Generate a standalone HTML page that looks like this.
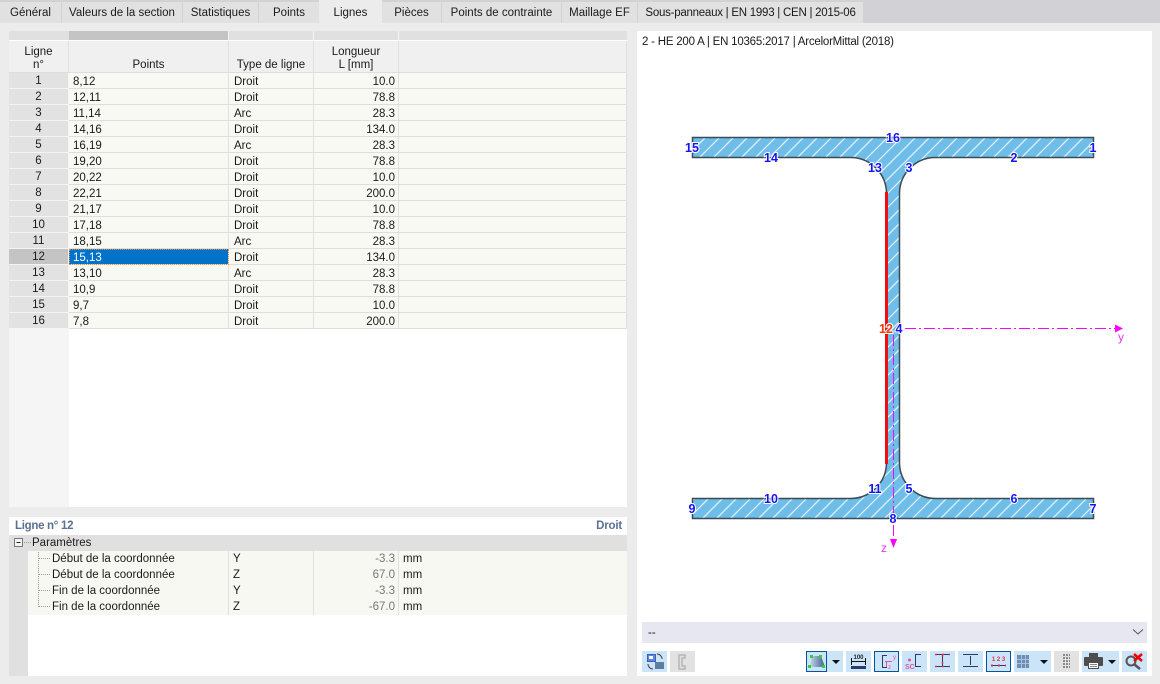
<!DOCTYPE html>
<html lang="fr"><head><meta charset="utf-8"><title>Lignes</title>
<style>
html,body{margin:0;padding:0}
body{width:1160px;height:684px;position:relative;overflow:hidden;background:#ececec;font-family:"Liberation Sans",sans-serif;font-size:11.5px;color:#1a1a1a}
.a{position:absolute}
.tab{position:absolute;top:2px;height:21px;background:#e1e1e1;line-height:23px;text-align:center;white-space:nowrap}
table{position:absolute;border-collapse:separate;border-spacing:0;table-layout:fixed;left:9px;top:41px;width:618px}
td{box-sizing:border-box;padding:3px 0 0;height:16px;line-height:12px;border-right:1px solid #e0e0e0;border-bottom:1px solid #dedede;background:#f8f9f3;white-space:nowrap;overflow:hidden}
td.n{padding-top:2px;line-height:13px;background:#e2e2e2;text-align:center;border-right:1px solid #f4f4f4;border-bottom:1px solid #f4f4f4}
td.p{padding-left:4px}td.t{padding-left:5px}td.l{text-align:right;padding-right:3px}
th{font-weight:normal;background:#f0f0f0;height:32px;line-height:13px;vertical-align:bottom;padding:0;border-right:1px solid #e0e0e0;border-bottom:1px solid #dedede;text-align:center;box-sizing:border-box}
td.s{background:#0072c9;color:#fff;outline:1px dotted #e8913a;outline-offset:-1px}
td.ns{background:#c4c4c4}
.pr{position:absolute;left:28px;width:599px;height:16px;line-height:16px;background:#f7f8f2}
.pr span{position:absolute;top:0;white-space:nowrap}
.b{position:absolute;top:651px;height:21px;background:#cce4f7;box-sizing:border-box}
.sel{border:1px solid #00569e}
</style></head><body>
<div class="a" style="left:0;top:0;width:1160px;height:23px;background:#d2d2d6"></div>
<div class="tab" style="left:0;width:61px">Général</div>
<div class="tab" style="left:62px;width:120px">Valeurs de la section</div>
<div class="tab" style="left:183px;width:75px">Statistiques</div>
<div class="tab" style="left:259px;width:60px">Points</div>
<div class="tab" style="left:319px;width:63px;top:0;height:23px;line-height:27px;background:#ececec">Lignes</div>
<div class="tab" style="left:382px;width:59px">Pièces</div>
<div class="tab" style="left:442px;width:119px">Points de contrainte</div>
<div class="tab" style="left:562px;width:75px">Maillage EF</div>
<div class="tab" style="left:638px;width:225px;letter-spacing:-.25px">Sous-panneaux | EN 1993 | CEN | 2015-06</div>

<div class="a" style="left:9px;top:31px;width:618px;height:476px;background:#fff"></div>
<div class="a" style="left:9px;top:73px;width:60px;height:434px;background:#f5f5f5"></div>
<div class="a" style="left:9px;top:31px;width:618px;height:9px;background:#e0e0e0"></div>
<div class="a" style="left:69px;top:31px;width:159px;height:9px;background:#c4c4c4"></div>
<div class="a" style="left:228px;top:31px;width:1px;height:9px;background:#f4f4f4"></div>
<div class="a" style="left:313px;top:31px;width:1px;height:9px;background:#f4f4f4"></div>
<div class="a" style="left:398px;top:31px;width:1px;height:9px;background:#f4f4f4"></div>
<table>
<colgroup><col style="width:60px"><col style="width:160px"><col style="width:85px"><col style="width:85px"><col style="width:228px"></colgroup>
<tr><th>Ligne<br>n°</th><th>Points</th><th>Type de ligne</th><th>Longueur<br>L [mm]</th><th></th></tr>
<tr><td class="n">1</td><td class="p">8,12</td><td class="t">Droit</td><td class="l">10.0</td><td></td></tr>
<tr><td class="n">2</td><td class="p">12,11</td><td class="t">Droit</td><td class="l">78.8</td><td></td></tr>
<tr><td class="n">3</td><td class="p">11,14</td><td class="t">Arc</td><td class="l">28.3</td><td></td></tr>
<tr><td class="n">4</td><td class="p">14,16</td><td class="t">Droit</td><td class="l">134.0</td><td></td></tr>
<tr><td class="n">5</td><td class="p">16,19</td><td class="t">Arc</td><td class="l">28.3</td><td></td></tr>
<tr><td class="n">6</td><td class="p">19,20</td><td class="t">Droit</td><td class="l">78.8</td><td></td></tr>
<tr><td class="n">7</td><td class="p">20,22</td><td class="t">Droit</td><td class="l">10.0</td><td></td></tr>
<tr><td class="n">8</td><td class="p">22,21</td><td class="t">Droit</td><td class="l">200.0</td><td></td></tr>
<tr><td class="n">9</td><td class="p">21,17</td><td class="t">Droit</td><td class="l">10.0</td><td></td></tr>
<tr><td class="n">10</td><td class="p">17,18</td><td class="t">Droit</td><td class="l">78.8</td><td></td></tr>
<tr><td class="n">11</td><td class="p">18,15</td><td class="t">Arc</td><td class="l">28.3</td><td></td></tr>
<tr><td class="n ns">12</td><td class="p s">15,13</td><td class="t">Droit</td><td class="l">134.0</td><td></td></tr>
<tr><td class="n">13</td><td class="p">13,10</td><td class="t">Arc</td><td class="l">28.3</td><td></td></tr>
<tr><td class="n">14</td><td class="p">10,9</td><td class="t">Droit</td><td class="l">78.8</td><td></td></tr>
<tr><td class="n">15</td><td class="p">9,7</td><td class="t">Droit</td><td class="l">10.0</td><td></td></tr>
<tr><td class="n">16</td><td class="p">7,8</td><td class="t">Droit</td><td class="l">200.0</td><td></td></tr>
</table>

<div class="a" style="left:9px;top:517px;width:618px;height:159px;background:#fff"></div>
<div class="a" style="left:15px;top:519px;font-weight:bold;color:#5b7196;line-height:15px;letter-spacing:-.3px">Ligne n° 12</div>
<div class="a" style="right:538px;top:519px;font-weight:bold;color:#5b7196;line-height:15px;letter-spacing:-.2px">Droit</div>
<div class="a" style="left:9px;top:535px;width:618px;height:16px;background:#e0e0e0"></div>
<div class="a" style="left:9px;top:551px;width:19px;height:125px;background:#e0e0e0"></div>
<div class="a" style="left:32px;top:535px;line-height:16px">Paramètres</div>
<div class="pr" style="top:551px"><span style="left:24px">Début de la coordonnée</span><span style="left:205px">Y</span><span style="right:232px;color:#777">-3.3</span><span style="left:375px">mm</span></div>
<div class="pr" style="top:567px"><span style="left:24px">Début de la coordonnée</span><span style="left:205px">Z</span><span style="right:232px;color:#777">67.0</span><span style="left:375px">mm</span></div>
<div class="pr" style="top:583px"><span style="left:24px">Fin de la coordonnée</span><span style="left:205px">Y</span><span style="right:232px;color:#777">-3.3</span><span style="left:375px">mm</span></div>
<div class="pr" style="top:599px"><span style="left:24px">Fin de la coordonnée</span><span style="left:205px">Z</span><span style="right:232px;color:#777">-67.0</span><span style="left:375px">mm</span></div>
<svg class="a" style="left:9px;top:535px" width="60" height="80"><rect x="5.5" y="3.5" width="8" height="8" fill="#f4f4f4" stroke="#777"/><path d="M7.500 7.500h4" stroke="#222"/><path d="M15 7.500h8M29.500 17v55M30 23.500h12M30 39.500h12M30 55.500h12M30 71.500h12" stroke="#999" stroke-dasharray="1 1" fill="none"/></svg>
<svg class="a" style="left:228px;top:551px" width="172" height="64"><path d="M.5 0v64M85.500 0v64M170.500 0v64" stroke="#e0e0e0"/></svg>

<div class="a" style="left:637px;top:31px;width:515px;height:645px;background:#fff"></div>
<div class="a" style="left:642px;top:36px;line-height:13px;letter-spacing:-.22px;white-space:nowrap">2 - HE 200 A | EN 10365:2017 | ArcelorMittal (2018)</div>

<svg class="a" style="left:0;top:0" width="1160" height="684" viewBox="0 0 1160 684">
<defs><pattern id="h" patternUnits="userSpaceOnUse" width="14" height="14" patternTransform="translate(2 1)"><rect width="14" height="14" fill="#6fbde9"/><path d="M-1 15L15 -1M-3 3L3 -3M11 17L17 11" stroke="#e4f3fb" stroke-width="1.200"/></pattern></defs>
<path d="M692.500 137.500H1093.500V157.500H935.500A36 36 0 0 0 899.500 193.500V462.500A36 36 0 0 0 935.500 498.500H1093.500V518.500H692.500V498.500H850.500A36 36 0 0 0 886.500 462.500V193.500A36 36 0 0 0 850.500 157.500H692.500Z" fill="url(#h)" stroke="#3c4a52" stroke-width="1.500"/>
<rect x="885" y="192" width="3" height="272" fill="#f10d0d"/>
<path d="M905 328.500H1116" stroke="#f0f" stroke-dasharray="11 3 2 3" fill="none"/>
<path d="M1115 324.500L1123 328.500L1115 332.500Z" fill="#f0f"/>
<path d="M893.500 335V540" stroke="#f0f" stroke-dasharray="11 3 2 3" fill="none"/>
<path d="M890 539L893.500 548L897 539Z" fill="#f0f"/>
<g font-size="12" fill="#e43be4" text-anchor="middle"><text x="1121" y="341">y</text><text x="884" y="552">z</text></g>
<g font-size="12.500" font-weight="bold" fill="#1414ee" stroke="#fff" stroke-width="2" paint-order="stroke" text-anchor="middle">
<text x="1093" y="152">1</text><text x="1014" y="162">2</text><text x="909" y="172">3</text><text x="899" y="333">4</text><text x="909" y="493">5</text><text x="1014" y="503">6</text><text x="1093" y="513">7</text><text x="893" y="523">8</text><text x="692" y="513">9</text><text x="771" y="503">10</text><text x="875" y="493">11</text><text x="886" y="333" fill="#f03a0a">12</text><text x="875" y="172">13</text><text x="771" y="162">14</text><text x="692" y="152">15</text><text x="893" y="142">16</text>
</g>
</svg>

<div class="a" style="left:642px;top:622px;width:505px;height:21px;background:#e6e7f0"></div>
<div class="a" style="left:648px;top:626px;line-height:14px">--</div>
<svg class="a" style="left:1132px;top:628px" width="12" height="9"><path d="M1 1.500L6 6L11 1.500" fill="none" stroke="#555" stroke-width="1"/></svg>

<div class="b" style="left:642px;width:25px"><svg width="25" height="21"><rect x="5.500" y="3.500" width="8" height="7" fill="#5d86e0" stroke="#3a5fc0"/><rect x="7" y="5" width="4" height="3" fill="#fff"/><rect x="13" y="11" width="9" height="7" fill="#5d7f9f"/><path d="M15 3a5 5 0 0 1 5 5M11 18a5 5 0 0 1 -5 -5" stroke="#444" fill="none"/></svg></div>
<div class="b" style="left:670px;width:25px;background:#e2e2e2"><svg width="25" height="21"><path d="M9 4h6v3h-3v8h3v3h-6z" fill="none" stroke="#b5b5b5" stroke-width="1.500"/></svg></div>
<div class="b" style="left:806px;width:37px"><svg width="37" height="21"><defs><linearGradient id="g" x1="0" x2="1"><stop offset="0" stop-color="#c3d6ea"/><stop offset="1" stop-color="#3f5f8f"/></linearGradient></defs><rect x=".5" y=".5" width="20" height="20" fill="none" stroke="#00569e"/><path d="M6 5h9l4 11H4z" fill="url(#g)"/><g fill="#35d035"><rect x="4" y="4" width="3" height="3"/><rect x="13" y="4" width="3" height="3"/><rect x="2" y="14" width="3" height="3"/><rect x="16" y="14" width="3" height="3"/></g><path d="M26 9h8l-4 4z" fill="#111"/></svg></div>
<div class="b" style="left:846px;width:25px"><svg width="25" height="21"><text x="12.500" y="8" font-size="6" font-weight="bold" text-anchor="middle" fill="#222">100</text><path d="M5.500 7v7M19.500 7v7M5 10.500h15" stroke="#111"/><rect x="5" y="15" width="15" height="3" fill="#2b3a66"/></svg></div>
<div class="b sel" style="left:874px;width:25px"><svg width="23" height="19" style="display:block"><path d="M12 3.500H7.500V15.500H12" fill="none" stroke="#2b3a66"/><path d="M10 9.500H17M11.500 9V15" stroke="#d9579c"/><text x="18" y="7" font-size="6" fill="#d9579c">y</text><text x="13" y="17" font-size="6" fill="#d9579c">z</text></svg></div>
<div class="b" style="left:902px;width:25px"><svg width="25" height="21"><path d="M19 3.500H13.500V15.500H19" fill="none" stroke="#2b3a66"/><circle cx="7.500" cy="9" r="1.500" fill="#d9579c"/><text x="3" y="18" font-size="7" font-weight="bold" fill="#d9579c">SC</text></svg></div>
<div class="b" style="left:930px;width:25px"><svg width="25" height="21"><path d="M5 3.500H20M5 15.500H20M12.500 4V16" stroke="#2b3a66"/><path d="M5 3.500H20M5 15.500H20M12.500 4V16" stroke="#e03050" stroke-width="1.500" stroke-dasharray="2 5"/></svg></div>
<div class="b" style="left:958px;width:25px"><svg width="25" height="21"><path d="M5 3.500H20M5 15.500H20M12.500 5V14" stroke="#2b3a66"/></svg></div>
<div class="b sel" style="left:986px;width:25px"><svg width="23" height="19" style="display:block"><text x="11.500" y="9" font-size="6" font-weight="bold" fill="#e03050" text-anchor="middle" xml:space="preserve">1 2 3</text><path d="M4 13.500H19" stroke="#2b3a66"/><path d="M4 13.500H19" stroke="#e03050" stroke-width="2" stroke-dasharray="2 5"/></svg></div>
<div class="b" style="left:1014px;width:37px"><svg width="37" height="21"><rect x="3" y="4" width="12" height="13" fill="#6d8fb5"/><path d="M3 8.500H15M3 12.500H15M7.500 4V17M11.500 4V17" stroke="#a9c3dc"/><path d="M26 9h8l-4 4z" fill="#111"/></svg></div>
<div class="b" style="left:1054px;width:25px;background:#e2e2e2"><svg width="25" height="21"><path d="M9 4h7M9 7h7M9 10h7M9 13h7M9 16h7" stroke="#8a8a8a" stroke-width="2" stroke-dasharray="2 1"/></svg></div>
<div class="b" style="left:1082px;width:37px"><svg width="37" height="21"><rect x="7" y="2" width="9" height="4" fill="#4e4e4e"/><rect x="2" y="6" width="19" height="9" rx="1" fill="#4e4e4e"/><rect x="6.500" y="11.500" width="10" height="6" fill="#fff" stroke="#4e4e4e"/><path d="M8 13.500h7M8 15.500h7" stroke="#888"/><path d="M26 9h8l-4 4z" fill="#111"/></svg></div>
<div class="b" style="left:1122px;width:25px"><svg width="25" height="21"><circle cx="9" cy="10" r="4.500" fill="none" stroke="#555" stroke-width="2"/><path d="M12.500 13.500L18 18" stroke="#555" stroke-width="2.500"/><path d="M12 3L20 10M20 3L12 10" stroke="#f00000" stroke-width="2.500"/></svg></div>
</body></html>
